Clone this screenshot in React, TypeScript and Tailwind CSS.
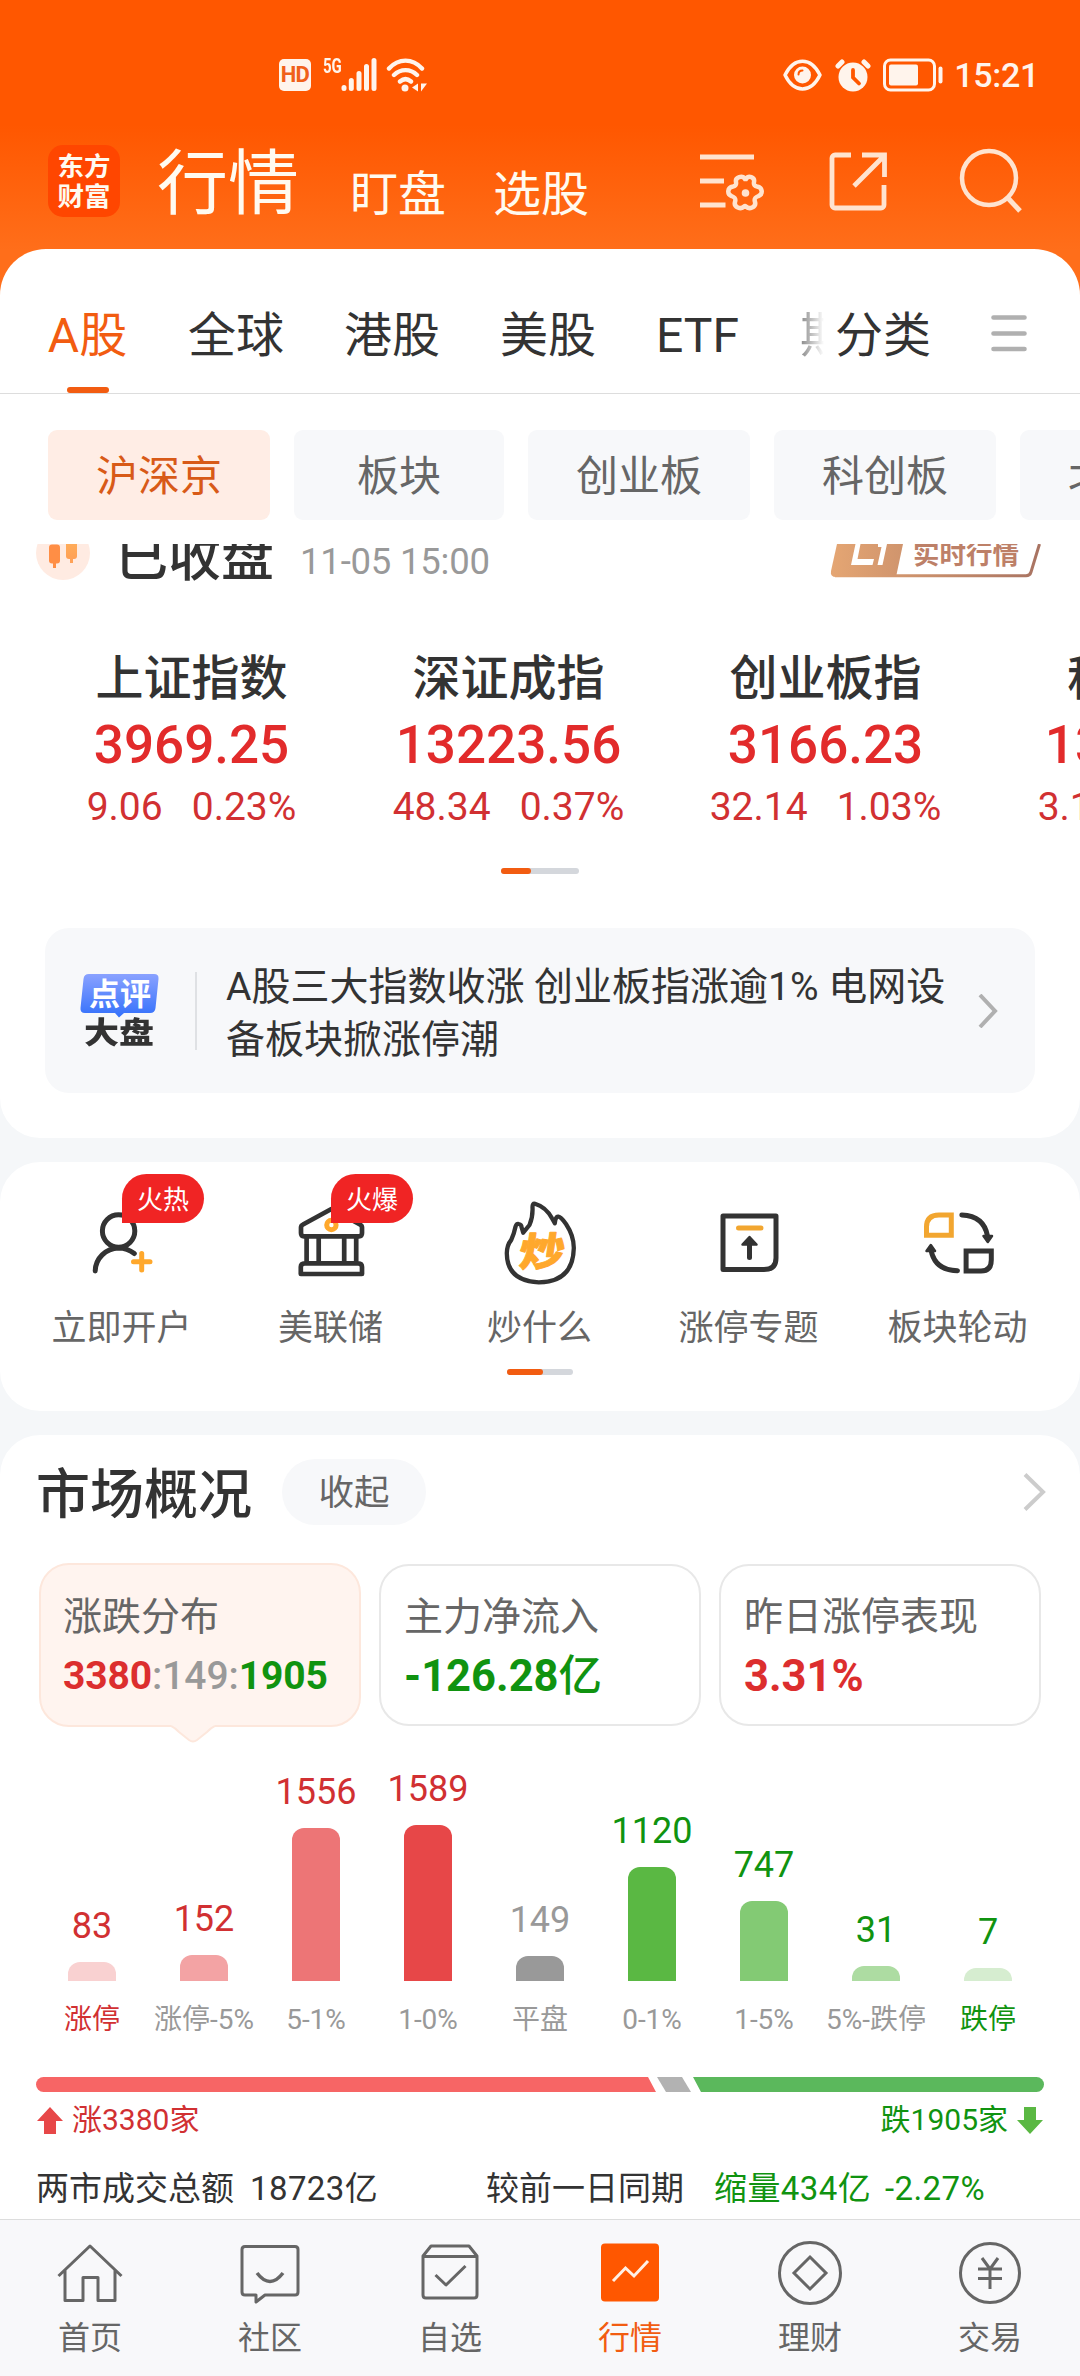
import { ReactNode } from "react"

const indices = [
    { name: "上证指数", value: "3969.25", change: "9.06", percent: "0.23%" },
    { name: "深证成指", value: "13223.56", change: "48.34", percent: "0.37%" },
    { name: "创业板指", value: "3166.23", change: "32.14", percent: "1.03%" },
    { name: "科创50", value: "1381.80", change: "3.10", percent: "0.23%" },
]

const distribution = [
    { label: "涨停", count: 83, height: 19, bar: "bg-[#f9d1d1]", text: "text-[#d13032]", labelText: "text-[#d13032]" },
    { label: "涨停-5%", count: 152, height: 26, bar: "bg-[#f3a3a4]", text: "text-[#d13032]", labelText: "text-[#999999]" },
    { label: "5-1%", count: 1556, height: 153, bar: "bg-[#ed7576]", text: "text-[#d13032]", labelText: "text-[#999999]" },
    { label: "1-0%", count: 1589, height: 156, bar: "bg-[#e74748]", text: "text-[#d13032]", labelText: "text-[#999999]" },
    { label: "平盘", count: 149, height: 25, bar: "bg-[#999999]", text: "text-[#999999]", labelText: "text-[#999999]" },
    { label: "0-1%", count: 1120, height: 114, bar: "bg-[#5ab843]", text: "text-[#109310]", labelText: "text-[#999999]" },
    { label: "1-5%", count: 747, height: 80, bar: "bg-[#83ca74]", text: "text-[#109310]", labelText: "text-[#999999]" },
    { label: "5%-跌停", count: 31, height: 15, bar: "bg-[#addca2]", text: "text-[#109310]", labelText: "text-[#999999]" },
    { label: "跌停", count: 7, height: 13, bar: "bg-[#d6edd0]", text: "text-[#109310]", labelText: "text-[#109310]" },
]

const StatusBar = () => (
    <div className="flex h-[33px] items-center text-[#fff4ec]">
        <div className="flex flex-1 items-center pl-[279px]">
            <div className="flex h-8 w-8 items-center justify-center rounded-[5px] bg-[#fff4ec] font-[Roboto] text-[22px] font-bold tracking-tight text-[#f0601a]">HD</div>
            <div className="ml-[12px] self-start font-[Roboto] text-[20px] leading-[16px] font-bold">
                <span className="inline-block origin-left scale-x-75">5G</span>
            </div>
            <svg width="36" height="34" viewBox="0 0 36 34" className="-ml-[7px]" stroke="currentColor" strokeWidth="5" strokeLinecap="round">
                <path d="M3 30.500v-1M10.300 30.500v-8M18 30.500v-15M25.500 30.500v-22M33 30.500v-28" />
            </svg>
            <svg width="42" height="34" viewBox="0 0 42 34" className="ml-[9px]" fill="none" stroke="currentColor" strokeWidth="4.400" strokeLinecap="round">
                <path d="M3 10.500C12.500 0 26.500 0 36 10.500M8 17c6.500-6.500 16.500-6.500 23 0M14 23.500c3.500-3 7.500-3 11 0" />
                <circle cx="19" cy="30" r="3.500" fill="currentColor" stroke="none" />
                <path d="M32 25.500v8l-6-4zM35 25.500v8l6-8z" fill="currentColor" stroke="none" />
            </svg>
        </div>
        <div className="flex items-center pr-[41px]">
            <svg width="39" height="32" viewBox="0 0 39 32" fill="none" stroke="currentColor" strokeWidth="3.500">
                <path d="M2 16C11-2.500 28-2.500 37 16C28 34.500 11 34.500 2 16z" strokeLinejoin="round" />
                <circle cx="19.500" cy="16" r="8.500" fill="currentColor" stroke="none" />
                <path d="M15.500 15.500c0-2.500 1.500-4 4-4" stroke="#ff5700" strokeWidth="2" strokeLinecap="round" />
            </svg>
            <svg width="36" height="34" viewBox="0 0 36 34" className="ml-[13px]">
                <circle cx="18" cy="19" r="14.500" fill="currentColor" />
                <path d="M3 8l4-4M33 8l-4-4" stroke="currentColor" strokeWidth="5" strokeLinecap="round" />
                <path d="M18 12v7.500l6 6" fill="none" stroke="#ff5700" strokeWidth="3.800" strokeLinecap="round" />
            </svg>
            <svg width="61" height="34" viewBox="0 0 61 34" className="ml-[12px]" fill="none" stroke="currentColor">
                <rect x="1.500" y="2" width="50" height="30" rx="6" strokeWidth="3" />
                <rect x="6" y="6.500" width="29" height="21" rx="2" fill="currentColor" stroke="none" />
                <path d="M57.500 10.500v13" strokeWidth="4" strokeLinecap="round" />
            </svg>
            <span className="ml-[10px] pt-[2px] font-[Roboto] text-[34px] leading-[33px] font-medium tracking-[-0.3px]">15:21</span>
        </div>
    </div>
)

const Header = () => (
    <header className="h-[249px] pt-[58px]">
        <StatusBar />
        <div className="mt-[54px] flex h-[72px] pl-12 text-[#fffaf0]">
            <div className="h-[72px] w-[72px] rounded-[15px] bg-[#ff4600] pt-[5px] text-center font-['Noto_Sans_CJK_SC',sans-serif] text-[26.500px] leading-[30px] font-bold">
                东方<br />财富
            </div>
            <div className="ml-[37px] w-[143px] text-[71px] leading-[78px]">行情</div>
            <div className="ml-[50px] w-[96px] pt-[14px] text-[48px] leading-[72px]">盯盘</div>
            <div className="ml-[47px] w-[96px] pt-[14px] text-[48px] leading-[72px]">选股</div>
            <svg width="66" height="72" viewBox="0 0 66 72" className="ml-[110px]" fill="none" stroke="#ffe3cf" strokeWidth="5">
                <path d="M1 12h54M1 36h24M1 60h25.500" />
                <path d="M46 35c2.500-4 9-2 8 3c-.5 3 .5 4 3 4.500c6 1 6 8 1.500 9.500c-4 1.500-4.500 3-3.500 6c1.500 5-6 8-9 4.500c-1-.8-1-.8-2 0c-3 3.500-10.500.5-9-4.500c1-3 .5-4.500-3.500-6c-4.500-1.500-4.500-8.500 1.500-9.500c2.500-.5 3.500-1.500 3-4.500c-1-5 6.500-7 9-3z" transform="translate(1 -1)" strokeWidth="4.500" />
                <circle cx="46.500" cy="48" r="3.800" fill="#ffe3cf" stroke="none" />
            </svg>
            <svg width="60" height="72" viewBox="0 0 60 72" className="ml-[64px]" fill="none" stroke="#ffe3cf" strokeWidth="4.800">
                <path d="M22 10H6a3 3 0 0 0-3 3v47a3 3 0 0 0 3 3h46a3 3 0 0 0 3-3V40M33 10h22.500v22M55 11L25 41" />
            </svg>
            <svg width="66" height="72" viewBox="0 0 66 72" className="ml-[70px]" fill="none" stroke="#ffe3cf" strokeWidth="4.500">
                <circle cx="30" cy="33" r="27" />
                <path d="M48 52l13 14" strokeWidth="5" />
            </svg>
        </div>
    </header>
)

const Tabs = () => (
    <div className="rounded-t-[46px] bg-white">
        <div className="flex h-[145px] border-b border-[#dddddd] pl-12 text-[48px] leading-[173px] text-[#333333]">
            <div className="flex w-[79px] flex-col items-center text-[#f25c11]">
                <span className="h-[138px] whitespace-nowrap">A股</span>
                <span className="h-[6px] w-[42px] rounded-full bg-[#f25c11]" />
            </div>
            <span className="ml-[61px] w-[96px]">全球</span>
            <span className="ml-[60px] w-[96px]">港股</span>
            <span className="ml-[60px] w-[96px]">美股</span>
            <span className="ml-[60px] w-[82px]">ETF</span>
            <span className="ml-[62px] w-[24px] overflow-hidden bg-linear-to-r from-[#888888] to-white bg-clip-text text-transparent">期</span>
            <span className="ml-[11px] w-[96px]">分类</span>
            <svg width="36" height="37" viewBox="0 0 36 37" className="mt-[66px] ml-[60px]" stroke="#b0b0b0" strokeWidth="4.600" strokeLinecap="round">
                <path d="M2.500 2.500h31M2.500 18.500h31M2.500 34h31" />
            </svg>
        </div>
        <div className="flex gap-6 overflow-hidden pt-9 pb-6 pl-12 text-[42px] leading-[94px] text-[#666666]">
            <div className="h-[90px] w-[222px] shrink-0 rounded-[9px] bg-[#ffede5] text-center text-[#d85a18]">沪深京</div>
            <div className="h-[90px] w-[210px] shrink-0 rounded-[9px] bg-[#f7f8fa] text-center">板块</div>
            <div className="h-[90px] w-[222px] shrink-0 rounded-[9px] bg-[#f7f8fa] text-center">创业板</div>
            <div className="h-[90px] w-[222px] shrink-0 rounded-[9px] bg-[#f7f8fa] text-center">科创板</div>
            <div className="h-[90px] w-[222px] shrink-0 rounded-[9px] bg-[#f7f8fa] text-center">北交所</div>
        </div>
    </div>
)

const MarketState = () => (
    <div className="flex h-[40px] overflow-hidden pr-[39px] pl-9">
        <svg width="54" height="40" viewBox="0 14 54 40" className="shrink-0">
            <defs>
                <linearGradient id="candle" x1="0" y1="0" x2="0" y2="1">
                    <stop offset="0" stopColor="#ffb45c" />
                    <stop offset="1" stopColor="#ffa055" />
                </linearGradient>
            </defs>
            <circle cx="27" cy="23" r="27" fill="#ffebe2" />
            <rect x="13" y="14.500" width="11" height="19" rx="3" fill="#ff8e45" />
            <path d="M18.500 30v8" stroke="#ff8e45" strokeWidth="3" />
            <rect x="30" y="4" width="11" height="25" rx="3" fill="url(#candle)" />
            <path d="M35.500 27v6" stroke="#ffa258" strokeWidth="3" />
        </svg>
        <div className="ml-[25px] w-[162px] text-[53px] leading-[28px] font-medium text-[#333333]">已收盘</div>
        <div className="ml-[23px] flex-1 text-[36.500px] leading-[36px] tracking-[-0.2px] text-[#999999]">11-05 15:00</div>
        <div className="relative h-[40px] w-[211px]">
            <svg width="211" height="40" viewBox="0 0 211 40" fill="none">
                <defs>
                    <linearGradient id="level" x1="0" y1="0" x2="211" y2="0" gradientUnits="userSpaceOnUse">
                        <stop offset="0" stopColor="#e5a673" />
                        <stop offset="1" stopColor="#a87362" />
                    </linearGradient>
                </defs>
                <path d="M7 0H73L66 33H6Q0 33 1 27z" fill="url(#level)" />
                <path d="M5 31.700H196Q200 31.700 201 28L209.500 0" stroke="url(#level)" strokeWidth="3" />
                <path d="M25.500 0H30.500L27.500 15H44L42.500 21H21zM48 0H57L52.500 21H47.500L51.500 3H48z" fill="#ffffff" />
            </svg>
            <span className="absolute -top-[6px] left-[83px] text-[26.500px] leading-[34px] font-bold text-[#bd8068]">实时行情</span>
        </div>
    </div>
)

const Pager = ({ className, active }: { className: string; active: string }) => (
    <div className={`mx-auto h-[6px] rounded-full bg-[#d4d7dc] ${className}`}>
        <div className={`h-[6px] rounded-full bg-[#f25c11] ${active}`} />
    </div>
)

const Indices = () => (
    <div className="flex overflow-hidden pl-[33px]">
        {indices.map((item) => (
            <div key={item.name} className="flex w-[317px] shrink-0 flex-col items-center">
                <div className="text-[48px] leading-[66px] font-medium text-[#333333]">{item.name}</div>
                <div className="text-[53px] leading-[66px] font-medium text-[#e22b2b]">{item.value}</div>
                <div className="flex gap-[29px] text-[39px] leading-[58px] text-[#d13032]">
                    <span>{item.change}</span>
                    <span>{item.percent}</span>
                </div>
            </div>
        ))}
    </div>
)

const NewsCard = () => (
    <div className="mx-[45px] mt-[54px] flex h-[165px] items-center rounded-[24px] bg-[#f7f8fa]">
        <div className="relative ml-[35px] h-[76px] w-[79px]">
            <svg width="79" height="46" viewBox="0 0 79 46">
                <defs>
                    <linearGradient id="bubble" x1="0" y1="0" x2="0" y2="1">
                        <stop offset="0" stopColor="#8aa2ff" />
                        <stop offset="1" stopColor="#3370fb" />
                    </linearGradient>
                </defs>
                <path d="M9 1H74Q79 1 78.500 6L75.500 35Q75 40 70 40H44L39 44.500L35 40H5Q0 40 .5 35L3.500 6Q4 1 9 1z" fill="url(#bubble)" />
            </svg>
            <span className="absolute top-[2px] left-[9px] text-[31px] leading-[40px] font-bold text-white">点评</span>
            <span className="absolute top-[43px] left-[4px] text-[35px] leading-[36px] font-black text-[#333333]">
                <span className="inline-block scale-y-[0.85]">大盘</span>
            </span>
        </div>
        <div className="ml-[36px] h-[78px] w-[2px] bg-[#dfe1e4]" />
        <p className="ml-[29px] w-[735px] pt-[6px] text-[39px] leading-[53px] whitespace-nowrap text-[#333333]">
            A股三大指数收涨 创业板指涨逾1% 电网设<br />备板块掀涨停潮
        </p>
        <svg width="20" height="34" viewBox="0 0 20 34" className="ml-[17px]" fill="none" stroke="#b0b0b0" strokeWidth="4">
            <path d="M2 1L17 17L2 33" />
        </svg>
    </div>
)

const Shortcut = ({ label, badge, children }: { label: string; badge?: string; children: ReactNode }) => (
    <div className="relative flex w-[209px] shrink-0 flex-col items-center pt-[36px]">
        <svg width="90" height="90" viewBox="0 0 90 90" fill="none" stroke="#333333" strokeWidth="5" strokeLinecap="round" strokeLinejoin="round">
            {children}
        </svg>
        <span className="mt-[17px] text-[35px] leading-[48px] text-[#666666]">{label}</span>
        {badge && (
            <span className="absolute top-3 left-[105px] h-[49px] w-[82px] rounded-[25px] rounded-bl-none bg-[#f02424] text-center text-[26px] leading-[53px] text-white">{badge}</span>
        )}
    </div>
)

const Shortcuts = () => (
    <section className="mt-6 h-[249px] overflow-hidden rounded-[40px] bg-white">
        <div className="flex pl-[17px]">
            <Shortcut label="立即开户" badge="火热">
                <circle cx="41.600" cy="33" r="16.200" />
                <path d="M18.200 73A24 23.500 0 0 1 41.600 50Q50 50 57.300 55.500" />
                <path d="M64.700 55.500v16.500M56.500 63.700h16.500" stroke="#ffa82c" />
            </Shortcut>
            <Shortcut label="美联储" badge="火爆">
                <circle cx="45.400" cy="27" r="4.700" stroke="#ffa82c" />
                <path d="M18 38.300H73Q76 38.300 76 35V29.500Q76 27.500 74 26.500L45.400 11L17 26.500Q15 27.500 15 29.500V35Q15 38.300 18 38.300zM20.600 39v26M32.700 39v26M58.200 39v26M70.200 39v26M14.800 76V69Q14.800 65.300 19 65.300H72Q76 65.300 76 69V76z" strokeWidth="4.700" />
            </Shortcut>
            <Shortcut label="炒什么">
                <path d="M40 5.700Q51 9 57 20.300L59.800 25.300Q60.500 18 63.500 18.700Q66 19 71 26Q79 38 78.800 50.300Q78 84 43.800 84.300Q12 83 11.800 55.300Q12 47 16.200 42Q19 36 20.500 28.700Q21.500 25.500 23.800 26Q26.500 26.500 26.500 29L28.200 34.700L34.500 27Q38 19 37.500 9Q37.500 5 40 5.700z" strokeWidth="4.300" />
                <text transform="translate(45 68) skewX(-8) scale(1.050 .92)" textAnchor="middle" fontSize="43" fontWeight="900" fill="#ffa82c" stroke="#ffa82c" strokeWidth="1">炒</text>
            </Shortcut>
            <Shortcut label="涨停专题">
                <path d="M19 18H72V60Q72 71.600 60 71.600H19z" />
                <path d="M34.500 30h22.500" stroke="#f2a630" />
                <path d="M45.500 59.500V44" />
                <path d="M38.500 46.500L45.500 39L52.500 46.500z" fill="#333333" strokeWidth="2.500" />
            </Shortcut>
            <Shortcut label="板块轮动">
                <path d="M13.500 37.300V29Q13.500 17 26 17H38.300V37.300z" stroke="#f2a630" strokeLinejoin="miter" />
                <path d="M48.800 17Q71 18 74.500 38M44.500 72.700Q22 72.500 18 52M53.100 53H78.300V62Q78.300 73 68 73H53.100z" strokeLinejoin="miter" />
                <path d="M70.500 38h8.500l-4.200 6zM13.500 53h8.500l-4.200-6z" fill="#333333" strokeWidth="2.500" />
            </Shortcut>
        </div>
        <Pager className="mt-[16px] w-[66px]" active="w-9" />
    </section>
)

const Distribution = () => (
    <div className="flex h-[282px] items-end pt-[15px] pl-9">
        {distribution.map((item) => (
            <div key={item.label} className="flex w-[112px] shrink-0 flex-col items-center">
                <span className={`text-[36px] leading-[50px] ${item.text}`}>{item.count}</span>
                <div className={`mt-[11px] w-12 rounded-t-[12px] ${item.bar}`} style={{ height: item.height }} />
                <span className={`mt-[19px] text-[28px] leading-[40px] whitespace-nowrap ${item.labelText}`}>{item.label}</span>
            </div>
        ))}
    </div>
)

const Overview = () => (
    <section className="mt-6 h-[784px] rounded-t-[40px] bg-white pt-6">
        <div className="flex h-[66px] items-center pr-[34px] pl-9">
            <h2 className="pt-[7px] text-[54px] leading-[66px] font-medium text-[#333333]">市场概况</h2>
            <button className="ml-[30px] h-[66px] w-[144px] rounded-full bg-[#f7f8fa] pt-[4px] text-[35.500px] text-[#666666]">收起</button>
            <svg width="23" height="38" viewBox="0 0 23 38" className="ml-auto" fill="none" stroke="#cccccc" strokeWidth="4">
                <path d="M2 1.500L20 19L2 36.500" />
            </svg>
        </div>
        <div className="mt-[38px] flex gap-[18px] px-[39px] text-[39px] text-[#666666]">
            <div className="relative h-[164px] w-[322px] rounded-[30px] border-2 border-[#fde7dc] bg-[#fff4ef] pt-[24px] pl-[22px]">
                <div className="leading-[56px]">涨跌分布</div>
                <div className="text-[39px] leading-[62px] font-bold tracking-[-0.1px] text-[#999999]">
                    <span className="text-[#dc2e2e]">3380</span><span className="font-medium">:149:</span><span className="text-[#109310]">1905</span>
                </div>
                <svg width="44" height="18" viewBox="0 0 44 18" className="absolute top-[160px] left-[130px]">
                    <path d="M0 0H44V2Q40 3 36 7L26 15Q22 18 18 15L8 7Q4 3 0 2z" fill="#fff4ef" />
                    <path d="M0 1Q4 3 8 7L18 15Q22 18 26 15L36 7Q40 3 44 1" fill="none" stroke="#fde7dc" strokeWidth="2" />
                </svg>
            </div>
            <div className="mt-px h-[162px] w-[322px] rounded-[30px] border-2 border-[#e8e8e8] pt-[23px] pl-[23px]">
                <div className="leading-[56px]">主力净流入</div>
                <div className="text-[43.500px] leading-[63px] font-bold text-[#109310]">-126.28<span className="font-medium">亿</span></div>
            </div>
            <div className="mt-px h-[162px] w-[322px] rounded-[30px] border-2 border-[#e8e8e8] pt-[23px] pl-[23px]">
                <div className="leading-[56px]">昨日涨停表现</div>
                <div className="text-[43.500px] leading-[63px] font-bold text-[#dc2e2e]">3.31%</div>
            </div>
        </div>
        <div className="mt-[31px]">
            <Distribution />
        </div>
        <svg width="1008" height="15" viewBox="0 0 1008 15" className="mt-[37px] ml-9">
            <path d="M7.500 0H612L620 15H7.500A7.500 7.500 0 0 1 7.500 0z" fill="#f76565" />
            <path d="M621 0H646L655 15H630z" fill="#b2b2b2" />
            <path d="M657 0H1000.500A7.500 7.500 0 0 1 1000.500 15H665z" fill="#5bb85c" />
        </svg>
        <div className="mt-[8px] flex h-10 items-center justify-between px-[37px] text-[30px] leading-10">
            <div className="flex items-center gap-[9px] text-[#d13032]">
                <svg width="26" height="27" viewBox="0 0 26 27" fill="#e74748"><path d="M13 0L26 14H19V27H7V14H0z" /></svg>
                涨3380家
            </div>
            <div className="flex items-center gap-[9px] text-[#109310]">
                跌1905家
                <svg width="26" height="27" viewBox="0 0 26 27" fill="#5ab843"><path d="M13 27L26 13H19V0H7V13H0z" /></svg>
            </div>
        </div>
        <div className="mt-[24px] flex text-[33px] leading-[50px] text-[#333333]">
            <span className="ml-9 w-[214px]">两市成交总额</span>
            <span className="w-[236px] tracking-[0.4px]">18723亿</span>
            <span className="w-[228px]">较前一日同期</span>
            <span className="w-[171px] tracking-[0.4px] text-[#109310]">缩量434亿</span>
            <span className="tracking-[0.4px] text-[#109310]">-2.27%</span>
        </div>
    </section>
)

const NavItem = ({ label, active, children }: { label: string; active?: boolean; children: ReactNode }) => (
    <div className={`flex w-[180px] shrink-0 flex-col items-center pt-[18px] text-[32px] leading-[44px] ${active ? "text-[#f25c11]" : "text-[#666666]"}`}>
        <svg width="70" height="72" viewBox="0 0 70 72" fill="none" stroke="#666666" strokeWidth="3" strokeLinejoin="round">
            {children}
        </svg>
        <span className="mt-[6px]">{label}</span>
    </div>
)

const BottomNav = () => (
    <nav className="flex h-[157px] overflow-hidden border-t border-[#dddddd] bg-[#f8f8fa]">
        <NavItem label="首页">
            <path d="M3.500 38L35 8L66.500 38M10 32V62.500H28V39.500H43V62.500H60V32" />
        </NavItem>
        <NavItem label="社区">
            <path d="M10 8.500H60Q63 8.500 63 11.500V54Q63 57 60 57H30L21 64V57H10Q7 57 7 54V11.500Q7 8.500 10 8.500z" />
            <path d="M22 35Q35 52 48 35" strokeWidth="3.500" />
        </NavItem>
        <NavItem label="自选">
            <path d="M8 18L16 8H54L62 18V57Q62 60 59 60H11Q8 60 8 57zM8 18.500H62M20.500 37L31 47L50.500 28" />
        </NavItem>
        <NavItem label="行情" active>
            <rect x="6" y="5.500" width="58" height="58" rx="4" fill="#ff5700" stroke="none" />
            <path d="M18 43L30.500 30L39 38L53 23" stroke="#fff0e5" strokeLinejoin="miter" />
        </NavItem>
        <NavItem label="理财">
            <circle cx="35" cy="35" r="30.500" />
            <path d="M35 19L51 35L35 51L19 35z" strokeLinejoin="miter" />
        </NavItem>
        <NavItem label="交易">
            <circle cx="35" cy="35" r="29.500" />
            <path d="M27 20L35 31L43 20M23 31H47M23 40.500H47M35 31V51" />
        </NavItem>
    </nav>
)

export default function App() {
    return (
        <div className="h-[2376px] w-[1080px] overflow-hidden bg-[#f5f7f9] font-[Roboto,'Noto_Sans_CJK_SC',sans-serif]">
            <div className="bg-[linear-gradient(to_bottom,#ff5700_125px,#ff6e1a_250px)]">
                <Header />
                <Tabs />
            </div>
            <section className="h-[594px] rounded-b-[40px] bg-white">
                <MarketState />
                <div className="h-[62px]" />
                <Indices />
                <Pager className="mt-[32px] w-[78px]" active="w-[30px]" />
                <NewsCard />
            </section>
            <Shortcuts />
            <Overview />
            <BottomNav />
        </div>
    )
}
